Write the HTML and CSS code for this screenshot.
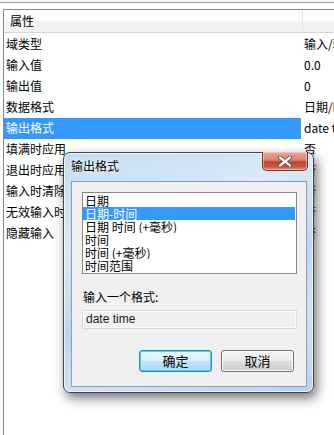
FILE: index.html
```html
<!DOCTYPE html>
<html lang="zh">
<head>
<meta charset="utf-8">
<link rel="stylesheet" href="styles.css">
</head>
<body>
<div class="topbar"></div>
<div class="table">
  <div class="thead">
    <div class="th th-name">属性</div>
    <div class="th th-val"></div>
  </div>
  <div class="row"><div class="name">域类型</div><div class="val">输入/输出</div></div>
  <div class="row"><div class="name">输入值</div><div class="val">0.0</div></div>
  <div class="row"><div class="name">输出值</div><div class="val">0</div></div>
  <div class="row"><div class="name">数据格式</div><div class="val">日期/时间</div></div>
  <div class="row sel"><div class="name">输出格式</div><div class="val">date time</div></div>
  <div class="row"><div class="name">填满时应用</div><div class="val">否</div></div>
  <div class="row"><div class="name">退出时应用</div><div class="val">否</div></div>
  <div class="row"><div class="name">输入时清除</div><div class="val">否</div></div>
  <div class="row"><div class="name">无效输入时</div><div class="val">否</div></div>
  <div class="row"><div class="name">隐藏输入</div><div class="val">否</div></div>
</div>

<div class="dialog">
  <div class="titlebar">
    <span class="title">输出格式</span>
    <div class="close"><svg width="14" height="11" viewBox="0 0 14 11"><path d="M2 1.5 L12 9.5 M12 1.5 L2 9.5" stroke="#4a3a38" stroke-width="4" stroke-linecap="round"/><path d="M2 1.5 L12 9.5 M12 1.5 L2 9.5" stroke="#ffffff" stroke-width="2.4" stroke-linecap="round"/></svg></div>
  </div>
  <div class="client">
    <div class="listbox">
      <div class="item">日期</div>
      <div class="item active">日期-时间</div>
      <div class="item">日期 时间 (+毫秒)</div>
      <div class="item">时间</div>
      <div class="item">时间 (+毫秒)</div>
      <div class="item">时间范围</div>
    </div>
    <div class="label">输入一个格式:</div>
    <div class="textbox">date time</div>
    <div class="buttons">
      <div class="btn default">确定</div>
      <div class="btn">取消</div>
    </div>
  </div>
</div>
</body>
</html>
```

FILE: styles.css
```css
html, body {
  margin: 0;
  padding: 0;
  background: #ffffff;
  width: 334px;
  height: 435px;
  overflow: hidden;
  font-family: "Noto Sans CJK SC", "Liberation Sans", sans-serif;
  font-size: 12px;
  color: #000;
}

.topbar {
  height: 2px;
  background: #f2f2f2;
  border-bottom: 1px solid #a0a0a0;
  margin-bottom: 6px;
}

.table {
  margin-left: 3px;
  width: 331px;
  height: 430px;
  overflow: hidden;
  border-left: 1px solid #828790;
  border-top: 1px solid #828790;
}

.thead {
  display: flex;
  height: 22px;
  background: linear-gradient(#ffffff 0%, #ffffff 45%, #f1f2f4 55%, #f1f2f4 100%);
  border-bottom: 1px solid #d5d5d5;
}

.th {
  line-height: 22px;
}

.th-name {
  width: 299px;
  padding-left: 6px;
  box-sizing: border-box;
  border-right: 1px solid #e3e4e6;
}

.th-val {
  flex: 1;
}

.row {
  display: flex;
  height: 21px;
  line-height: 19px;
}

.thead + .row {
  margin-top: 1px;
}

.name {
  width: 297px;
  flex: none;
  padding-left: 2px;
  box-sizing: border-box;
}

.val {
  margin-left: 2px;
  padding-left: 1px;
  white-space: nowrap;
  overflow: hidden;
  flex: 1;
  min-width: 0;
}

.row.sel .name {
  background: #3399ff;
  color: #ffffff;
}

.dialog {
  position: absolute;
  left: 63px;
  top: 152px;
  width: 251px;
  height: 241px;
  box-sizing: border-box;
  border: 1px solid #3c4550;
  border-radius: 7px;
  background: linear-gradient(160deg, #c3dcf3 0%, #d9e9f8 30%, #bcd6f0 55%, #cfe2f5 75%, #b9d3ee 100%);
  box-shadow: 3px 5px 12px rgba(0, 0, 0, 0.55), inset 0 0 0 1px rgba(255,255,255,0.7);
  display: flex;
  flex-direction: column;
  padding: 0 6px 5px 7px;
}

.titlebar {
  height: 28px;
  position: relative;
}

.title {
  position: absolute;
  left: 0px;
  top: 5px;
  line-height: 16px;
  color: #000;
  text-shadow: 0 0 6px #ffffff, 0 0 3px #ffffff;
}

.close {
  position: absolute;
  right: -1px;
  top: -1px;
  width: 46px;
  height: 19px;
  box-sizing: border-box;
  border: 1px solid #6b3a33;
  border-top: none;
  border-radius: 0 0 5px 5px;
  background: linear-gradient(#e9a99b 0%, #d9826f 45%, #c2412c 55%, #cf5c44 85%, #e89a82 100%);
  box-shadow: inset 0 0 0 1px rgba(255, 220, 210, 0.5);
  display: flex;
  align-items: center;
  justify-content: center;
}

.client {
  flex: 1;
  background: #f0f0f0;
  border: 1px solid #8d9db3;
  padding: 10px 9px 0 10px;
  display: flex;
  flex-direction: column;
}

.listbox {
  height: 82px;
  box-sizing: border-box;
  border: 1px solid #828790;
  background: #ffffff;
  padding: 1px 1px 1px 0;
}

.item {
  height: 13px;
  line-height: 13px;
  padding-left: 2px;
  font-size: 12px;
  white-space: nowrap;
  overflow: hidden;
}

.item.active {
  background: #3399ff;
  color: #ffffff;
}

.label {
  margin-top: 15px;
  height: 16px;
  line-height: 16px;
  padding-left: 1px;
}

.textbox {
  margin-top: 5px;
  height: 19px;
  box-sizing: border-box;
  border: 1px solid #dadada;
  background: #f0f0f0;
  padding-left: 3px;
  line-height: 17px;
  font-family: "Liberation Sans", sans-serif;
  font-size: 12px;
  color: #1a1a1a;
  box-shadow: inset 0 0 0 1px #fbfbfb;
}

.buttons {
  margin-top: 21px;
  display: flex;
  justify-content: flex-end;
  gap: 9px;
  padding-right: 3px;
}

.btn {
  width: 73px;
  height: 22px;
  box-sizing: border-box;
  border: 1px solid #707070;
  border-radius: 3px;
  background: linear-gradient(#f2f2f2 0%, #ebebeb 48%, #dddddd 52%, #cfcfcf 100%);
  box-shadow: inset 0 0 0 1px #fcfcfc;
  text-align: center;
  line-height: 20px;
  font-size: 13px;
}

.btn.default {
  border-color: #3c7fb1;
  background: linear-gradient(#eaf6fd 0%, #d9f0fc 48%, #bee6fd 52%, #a7d9f5 100%);
  box-shadow: inset 0 0 0 1px #48d2fa;
}
```
